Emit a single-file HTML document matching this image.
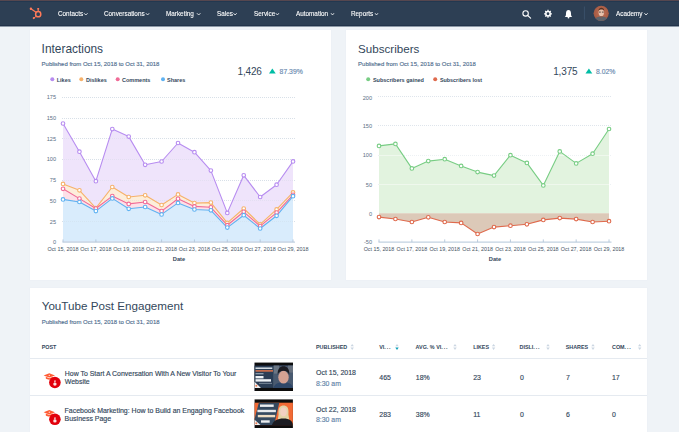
<!DOCTYPE html>
<html><head><meta charset="utf-8"><style>
html,body{margin:0;padding:0;background:#fff;}
body{width:681px;height:442px;position:relative;overflow:hidden;font-family:"Liberation Sans",sans-serif;}
.t{position:absolute;white-space:nowrap;}
.abs{position:absolute;}
.card{position:absolute;background:#fff;box-shadow:0 0 0 0.5px #ebf0f5;}
.s{-webkit-text-stroke:0.2px currentColor;}
</style></head><body>
<div class="abs" style="left:0;top:0;width:679px;height:432px;background:#eff3f7"></div>
<div class="abs" style="left:0;top:0;width:679px;height:1px;background:#56474f"></div>
<div class="abs" style="left:0;top:1px;width:679px;height:25px;background:#2d3f54"></div>
<div class="abs" style="left:0;top:25px;width:679px;height:1px;background:#22334a"></div>
<div class="abs" style="left:0;top:1px;width:679px;height:1px;background:#233850"></div>
<div class="abs" style="left:0;top:26px;width:679px;height:1px;background:#8d99a6"></div>
<div class="card" style="left:30px;top:30px;width:301px;height:250px"></div>
<div class="card" style="left:346px;top:30px;width:301px;height:250px"></div>
<div class="card" style="left:30px;top:287.5px;width:617px;height:150px"></div>
<div class="abs" style="left:30px;top:358px;width:617px;height:0.8px;background:#e5eaf0"></div>
<div class="abs" style="left:30px;top:394.5px;width:617px;height:0.8px;background:#e5eaf0"></div>
<svg class="abs" style="left:0;top:0" width="681" height="442" viewBox="0 0 681 442">
<g id="logo" fill="#ff7a59" stroke="#ff7a59">
<circle cx="38.2" cy="14.2" r="2.6" fill="none" stroke-width="1.5"/>
<line x1="30.9" y1="8.7" x2="36.4" y2="12.5" stroke-width="1.15"/>
<circle cx="30.9" cy="8.7" r="1.2" stroke="none"/>
<line x1="38.2" y1="8.9" x2="38.2" y2="11.6" stroke-width="1.1"/>
<rect x="37.2" y="8.0" width="2" height="1.6" rx="0.5" stroke="none"/>
<line x1="33.9" y1="18" x2="36.3" y2="16.2" stroke-width="1"/>
<circle cx="33.8" cy="18.1" r="1.1" stroke="none"/>
</g>
<polyline points="84.0,13.2 85.8,15.0 87.6,13.2" fill="none" stroke="#fff" stroke-width="0.8"/><polyline points="145.9,13.2 147.6,15.0 149.2,13.2" fill="none" stroke="#fff" stroke-width="0.8"/><polyline points="196.9,13.2 198.7,15.0 200.4,13.2" fill="none" stroke="#fff" stroke-width="0.8"/><polyline points="233.5,13.2 235.1,15.0 236.7,13.2" fill="none" stroke="#fff" stroke-width="0.8"/><polyline points="275.8,13.2 277.4,15.0 278.9,13.2" fill="none" stroke="#fff" stroke-width="0.8"/><polyline points="331.0,13.2 332.5,15.0 334.0,13.2" fill="none" stroke="#fff" stroke-width="0.8"/><polyline points="375.0,13.2 376.5,15.0 378.0,13.2" fill="none" stroke="#fff" stroke-width="0.8"/><polyline points="644.4,13.2 646.0,15.0 647.7,13.2" fill="none" stroke="#fff" stroke-width="0.8"/>
<g id="search" stroke="#fff" fill="none"><circle cx="525.6" cy="13.4" r="2.7" stroke-width="1.1"/><line x1="527.6" y1="15.4" x2="530.6" y2="18.1" stroke-width="1.2" stroke-linecap="round"/></g>
<g id="gear"><circle cx="548" cy="13.75" r="2.2" fill="none" stroke="#fff" stroke-width="1.6"/><line x1="550.60" y1="13.75" x2="551.90" y2="13.75" stroke="#fff" stroke-width="1.25"/><line x1="549.84" y1="15.59" x2="550.76" y2="16.51" stroke="#fff" stroke-width="1.25"/><line x1="548.00" y1="16.35" x2="548.00" y2="17.65" stroke="#fff" stroke-width="1.25"/><line x1="546.16" y1="15.59" x2="545.24" y2="16.51" stroke="#fff" stroke-width="1.25"/><line x1="545.40" y1="13.75" x2="544.10" y2="13.75" stroke="#fff" stroke-width="1.25"/><line x1="546.16" y1="11.91" x2="545.24" y2="10.99" stroke="#fff" stroke-width="1.25"/><line x1="548.00" y1="11.15" x2="548.00" y2="9.85" stroke="#fff" stroke-width="1.25"/><line x1="549.84" y1="11.91" x2="550.76" y2="10.99" stroke="#fff" stroke-width="1.25"/></g>
<g id="bell" fill="#fff"><path d="M564.8,16.9 C565.9,16.1 566,15 566,13.3 C566,11.2 567,10 568.5,10 C570,10 571,11.2 571,13.3 C571,15 571.1,16.1 572.2,16.9 Z"/><circle cx="568.5" cy="17.6" r="0.9"/></g>
<line x1="584.4" y1="6.5" x2="584.4" y2="19.6" stroke="#3e5670" stroke-width="0.8"/>
<defs><radialGradient id="av" cx="0.5" cy="0.45" r="0.6"><stop offset="0" stop-color="#c27256"/><stop offset="1" stop-color="#9c523d"/></radialGradient>
<clipPath id="avc"><circle cx="601.2" cy="13.3" r="7.6"/></clipPath></defs>
<g clip-path="url(#avc)">
<rect x="593" y="5" width="17" height="17" fill="url(#av)"/>
<ellipse cx="601.3" cy="12.6" rx="2.7" ry="3.6" fill="#e8c2ac"/>
<path d="M598.4,11 C598.6,8.4 600,7.8 601.4,7.8 C602.8,7.8 604.2,8.4 604.3,11 C603.6,9.9 602.6,9.6 601.4,9.6 C600.2,9.6 599.1,9.9 598.4,11 Z" fill="#5a3324"/>
<rect x="599" y="11.6" width="1.8" height="1" fill="#5b4a44"/><rect x="601.9" y="11.6" width="1.8" height="1" fill="#5b4a44"/>
<path d="M594,22 C594.5,18 597,16.6 601.3,16.6 C605.6,16.6 608.1,18 608.6,22 Z" fill="#5f646c"/>
<path d="M600.3,16.6 L601.3,18.6 L602.3,16.6 Z" fill="#8a5a48"/>
</g>
<circle cx="52.3" cy="79.2" r="2" fill="#b78cf0"/><circle cx="81.3" cy="79.2" r="2" fill="#f6b26b"/><circle cx="117.7" cy="79.2" r="2" fill="#f06b97"/><circle cx="163" cy="79.2" r="2" fill="#5fb2f2"/><circle cx="368.2" cy="79.2" r="2" fill="#78cd84"/><circle cx="435.2" cy="79.2" r="2" fill="#df6a4d"/>
<polygon points="269,73.4 275.7,73.4 272.35,68.4" fill="#00bda5"/><polygon points="585.5,73.4 592.3,73.4 588.9,68.4" fill="#00bda5"/>
<line x1="62" y1="97.5" x2="295" y2="97.5" stroke="#dfe5ec" stroke-width="1" stroke-dasharray="1,1"/>
<line x1="62" y1="118.5" x2="295" y2="118.5" stroke="#dfe5ec" stroke-width="1" stroke-dasharray="1,1"/>
<line x1="62" y1="138.5" x2="295" y2="138.5" stroke="#dfe5ec" stroke-width="1" stroke-dasharray="1,1"/>
<line x1="62" y1="159.5" x2="295" y2="159.5" stroke="#dfe5ec" stroke-width="1" stroke-dasharray="1,1"/>
<line x1="62" y1="180.5" x2="295" y2="180.5" stroke="#dfe5ec" stroke-width="1" stroke-dasharray="1,1"/>
<line x1="62" y1="200.5" x2="295" y2="200.5" stroke="#dfe5ec" stroke-width="1" stroke-dasharray="1,1"/>
<line x1="62" y1="221.5" x2="295" y2="221.5" stroke="#dfe5ec" stroke-width="1" stroke-dasharray="1,1"/>
<line x1="378" y1="96.5" x2="611" y2="96.5" stroke="#dfe5ec" stroke-width="1" stroke-dasharray="1,1"/>
<line x1="378" y1="125.5" x2="611" y2="125.5" stroke="#dfe5ec" stroke-width="1" stroke-dasharray="1,1"/>
<line x1="378" y1="155.5" x2="611" y2="155.5" stroke="#dfe5ec" stroke-width="1" stroke-dasharray="1,1"/>
<line x1="378" y1="184.5" x2="611" y2="184.5" stroke="#dfe5ec" stroke-width="1" stroke-dasharray="1,1"/>
<path d="M63.00,123.50 L79.43,151.70 L95.86,181.20 L112.29,129.10 L128.72,136.60 L145.15,164.80 L161.58,161.50 L178.01,143.00 L194.44,152.20 L210.87,170.60 L227.30,212.90 L243.73,175.30 L260.16,197.00 L276.59,184.70 L293.02,161.40 L293.02,241.8 L63.00,241.8 Z" fill="#efe4fb"/>
<path d="M63.00,183.90 L79.43,190.30 L95.86,208.20 L112.29,187.00 L128.72,197.00 L145.15,195.30 L161.58,205.00 L178.01,194.40 L194.44,203.10 L210.87,202.60 L227.30,222.90 L243.73,208.50 L260.16,224.40 L276.59,209.40 L293.02,192.40 L293.02,241.8 L63.00,241.8 Z" fill="#fdeedb"/>
<path d="M63.00,188.80 L79.43,198.60 L95.86,208.50 L112.29,196.10 L128.72,203.90 L145.15,202.00 L161.58,211.10 L178.01,198.80 L194.44,206.40 L210.87,207.30 L227.30,225.20 L243.73,211.80 L260.16,226.10 L276.59,212.60 L293.02,194.80 L293.02,241.8 L63.00,241.8 Z" fill="#fde0e8"/>
<path d="M63.00,199.40 L79.43,202.00 L95.86,211.10 L112.29,198.40 L128.72,208.80 L145.15,207.00 L161.58,214.40 L178.01,202.90 L194.44,209.50 L210.87,210.30 L227.30,227.60 L243.73,215.20 L260.16,228.50 L276.59,215.80 L293.02,196.20 L293.02,241.8 L63.00,241.8 Z" fill="#d9ecfc"/>
<line x1="62" y1="97.5" x2="295" y2="97.5" stroke="#c9d3de" stroke-opacity="0.3" stroke-width="1" stroke-dasharray="1,1"/>
<line x1="62" y1="118.5" x2="295" y2="118.5" stroke="#c9d3de" stroke-opacity="0.3" stroke-width="1" stroke-dasharray="1,1"/>
<line x1="62" y1="138.5" x2="295" y2="138.5" stroke="#c9d3de" stroke-opacity="0.3" stroke-width="1" stroke-dasharray="1,1"/>
<line x1="62" y1="159.5" x2="295" y2="159.5" stroke="#c9d3de" stroke-opacity="0.3" stroke-width="1" stroke-dasharray="1,1"/>
<line x1="62" y1="180.5" x2="295" y2="180.5" stroke="#c9d3de" stroke-opacity="0.3" stroke-width="1" stroke-dasharray="1,1"/>
<line x1="62" y1="200.5" x2="295" y2="200.5" stroke="#c9d3de" stroke-opacity="0.3" stroke-width="1" stroke-dasharray="1,1"/>
<line x1="62" y1="221.5" x2="295" y2="221.5" stroke="#c9d3de" stroke-opacity="0.3" stroke-width="1" stroke-dasharray="1,1"/>
<path d="M63.00,123.50 L79.43,151.70 L95.86,181.20 L112.29,129.10 L128.72,136.60 L145.15,164.80 L161.58,161.50 L178.01,143.00 L194.44,152.20 L210.87,170.60 L227.30,212.90 L243.73,175.30 L260.16,197.00 L276.59,184.70 L293.02,161.40" fill="none" stroke="#b78cf0" stroke-width="1.1" stroke-linejoin="round"/>
<path d="M63.00,183.90 L79.43,190.30 L95.86,208.20 L112.29,187.00 L128.72,197.00 L145.15,195.30 L161.58,205.00 L178.01,194.40 L194.44,203.10 L210.87,202.60 L227.30,222.90 L243.73,208.50 L260.16,224.40 L276.59,209.40 L293.02,192.40" fill="none" stroke="#f6b26b" stroke-width="1.1" stroke-linejoin="round"/>
<path d="M63.00,188.80 L79.43,198.60 L95.86,208.50 L112.29,196.10 L128.72,203.90 L145.15,202.00 L161.58,211.10 L178.01,198.80 L194.44,206.40 L210.87,207.30 L227.30,225.20 L243.73,211.80 L260.16,226.10 L276.59,212.60 L293.02,194.80" fill="none" stroke="#f06b97" stroke-width="1.1" stroke-linejoin="round"/>
<path d="M63.00,199.40 L79.43,202.00 L95.86,211.10 L112.29,198.40 L128.72,208.80 L145.15,207.00 L161.58,214.40 L178.01,202.90 L194.44,209.50 L210.87,210.30 L227.30,227.60 L243.73,215.20 L260.16,228.50 L276.59,215.80 L293.02,196.20" fill="none" stroke="#5fb2f2" stroke-width="1.1" stroke-linejoin="round"/>
<circle cx="63.00" cy="123.50" r="1.8" fill="#fff" stroke="#b78cf0" stroke-width="1.1"/><circle cx="79.43" cy="151.70" r="1.8" fill="#fff" stroke="#b78cf0" stroke-width="1.1"/><circle cx="95.86" cy="181.20" r="1.8" fill="#fff" stroke="#b78cf0" stroke-width="1.1"/><circle cx="112.29" cy="129.10" r="1.8" fill="#fff" stroke="#b78cf0" stroke-width="1.1"/><circle cx="128.72" cy="136.60" r="1.8" fill="#fff" stroke="#b78cf0" stroke-width="1.1"/><circle cx="145.15" cy="164.80" r="1.8" fill="#fff" stroke="#b78cf0" stroke-width="1.1"/><circle cx="161.58" cy="161.50" r="1.8" fill="#fff" stroke="#b78cf0" stroke-width="1.1"/><circle cx="178.01" cy="143.00" r="1.8" fill="#fff" stroke="#b78cf0" stroke-width="1.1"/><circle cx="194.44" cy="152.20" r="1.8" fill="#fff" stroke="#b78cf0" stroke-width="1.1"/><circle cx="210.87" cy="170.60" r="1.8" fill="#fff" stroke="#b78cf0" stroke-width="1.1"/><circle cx="227.30" cy="212.90" r="1.8" fill="#fff" stroke="#b78cf0" stroke-width="1.1"/><circle cx="243.73" cy="175.30" r="1.8" fill="#fff" stroke="#b78cf0" stroke-width="1.1"/><circle cx="260.16" cy="197.00" r="1.8" fill="#fff" stroke="#b78cf0" stroke-width="1.1"/><circle cx="276.59" cy="184.70" r="1.8" fill="#fff" stroke="#b78cf0" stroke-width="1.1"/><circle cx="293.02" cy="161.40" r="1.8" fill="#fff" stroke="#b78cf0" stroke-width="1.1"/>
<circle cx="63.00" cy="183.90" r="1.8" fill="#fff" stroke="#f6b26b" stroke-width="1.1"/><circle cx="79.43" cy="190.30" r="1.8" fill="#fff" stroke="#f6b26b" stroke-width="1.1"/><circle cx="95.86" cy="208.20" r="1.8" fill="#fff" stroke="#f6b26b" stroke-width="1.1"/><circle cx="112.29" cy="187.00" r="1.8" fill="#fff" stroke="#f6b26b" stroke-width="1.1"/><circle cx="128.72" cy="197.00" r="1.8" fill="#fff" stroke="#f6b26b" stroke-width="1.1"/><circle cx="145.15" cy="195.30" r="1.8" fill="#fff" stroke="#f6b26b" stroke-width="1.1"/><circle cx="161.58" cy="205.00" r="1.8" fill="#fff" stroke="#f6b26b" stroke-width="1.1"/><circle cx="178.01" cy="194.40" r="1.8" fill="#fff" stroke="#f6b26b" stroke-width="1.1"/><circle cx="194.44" cy="203.10" r="1.8" fill="#fff" stroke="#f6b26b" stroke-width="1.1"/><circle cx="210.87" cy="202.60" r="1.8" fill="#fff" stroke="#f6b26b" stroke-width="1.1"/><circle cx="227.30" cy="222.90" r="1.8" fill="#fff" stroke="#f6b26b" stroke-width="1.1"/><circle cx="243.73" cy="208.50" r="1.8" fill="#fff" stroke="#f6b26b" stroke-width="1.1"/><circle cx="260.16" cy="224.40" r="1.8" fill="#fff" stroke="#f6b26b" stroke-width="1.1"/><circle cx="276.59" cy="209.40" r="1.8" fill="#fff" stroke="#f6b26b" stroke-width="1.1"/><circle cx="293.02" cy="192.40" r="1.8" fill="#fff" stroke="#f6b26b" stroke-width="1.1"/>
<circle cx="63.00" cy="188.80" r="1.8" fill="#fff" stroke="#f06b97" stroke-width="1.1"/><circle cx="79.43" cy="198.60" r="1.8" fill="#fff" stroke="#f06b97" stroke-width="1.1"/><circle cx="95.86" cy="208.50" r="1.8" fill="#fff" stroke="#f06b97" stroke-width="1.1"/><circle cx="112.29" cy="196.10" r="1.8" fill="#fff" stroke="#f06b97" stroke-width="1.1"/><circle cx="128.72" cy="203.90" r="1.8" fill="#fff" stroke="#f06b97" stroke-width="1.1"/><circle cx="145.15" cy="202.00" r="1.8" fill="#fff" stroke="#f06b97" stroke-width="1.1"/><circle cx="161.58" cy="211.10" r="1.8" fill="#fff" stroke="#f06b97" stroke-width="1.1"/><circle cx="178.01" cy="198.80" r="1.8" fill="#fff" stroke="#f06b97" stroke-width="1.1"/><circle cx="194.44" cy="206.40" r="1.8" fill="#fff" stroke="#f06b97" stroke-width="1.1"/><circle cx="210.87" cy="207.30" r="1.8" fill="#fff" stroke="#f06b97" stroke-width="1.1"/><circle cx="227.30" cy="225.20" r="1.8" fill="#fff" stroke="#f06b97" stroke-width="1.1"/><circle cx="243.73" cy="211.80" r="1.8" fill="#fff" stroke="#f06b97" stroke-width="1.1"/><circle cx="260.16" cy="226.10" r="1.8" fill="#fff" stroke="#f06b97" stroke-width="1.1"/><circle cx="276.59" cy="212.60" r="1.8" fill="#fff" stroke="#f06b97" stroke-width="1.1"/><circle cx="293.02" cy="194.80" r="1.8" fill="#fff" stroke="#f06b97" stroke-width="1.1"/>
<circle cx="63.00" cy="199.40" r="1.8" fill="#fff" stroke="#5fb2f2" stroke-width="1.1"/><circle cx="79.43" cy="202.00" r="1.8" fill="#fff" stroke="#5fb2f2" stroke-width="1.1"/><circle cx="95.86" cy="211.10" r="1.8" fill="#fff" stroke="#5fb2f2" stroke-width="1.1"/><circle cx="112.29" cy="198.40" r="1.8" fill="#fff" stroke="#5fb2f2" stroke-width="1.1"/><circle cx="128.72" cy="208.80" r="1.8" fill="#fff" stroke="#5fb2f2" stroke-width="1.1"/><circle cx="145.15" cy="207.00" r="1.8" fill="#fff" stroke="#5fb2f2" stroke-width="1.1"/><circle cx="161.58" cy="214.40" r="1.8" fill="#fff" stroke="#5fb2f2" stroke-width="1.1"/><circle cx="178.01" cy="202.90" r="1.8" fill="#fff" stroke="#5fb2f2" stroke-width="1.1"/><circle cx="194.44" cy="209.50" r="1.8" fill="#fff" stroke="#5fb2f2" stroke-width="1.1"/><circle cx="210.87" cy="210.30" r="1.8" fill="#fff" stroke="#5fb2f2" stroke-width="1.1"/><circle cx="227.30" cy="227.60" r="1.8" fill="#fff" stroke="#5fb2f2" stroke-width="1.1"/><circle cx="243.73" cy="215.20" r="1.8" fill="#fff" stroke="#5fb2f2" stroke-width="1.1"/><circle cx="260.16" cy="228.50" r="1.8" fill="#fff" stroke="#5fb2f2" stroke-width="1.1"/><circle cx="276.59" cy="215.80" r="1.8" fill="#fff" stroke="#5fb2f2" stroke-width="1.1"/><circle cx="293.02" cy="196.20" r="1.8" fill="#fff" stroke="#5fb2f2" stroke-width="1.1"/>
<line x1="62.5" y1="242.1" x2="295" y2="242.1" stroke="#b3c6d9" stroke-width="1"/>
<line x1="63.00" y1="239.4" x2="63.00" y2="242.1" stroke="#b3c6d9" stroke-width="0.9"/>
<line x1="95.86" y1="239.4" x2="95.86" y2="242.1" stroke="#b3c6d9" stroke-width="0.9"/>
<line x1="128.72" y1="239.4" x2="128.72" y2="242.1" stroke="#b3c6d9" stroke-width="0.9"/>
<line x1="161.58" y1="239.4" x2="161.58" y2="242.1" stroke="#b3c6d9" stroke-width="0.9"/>
<line x1="194.44" y1="239.4" x2="194.44" y2="242.1" stroke="#b3c6d9" stroke-width="0.9"/>
<line x1="227.30" y1="239.4" x2="227.30" y2="242.1" stroke="#b3c6d9" stroke-width="0.9"/>
<line x1="260.16" y1="239.4" x2="260.16" y2="242.1" stroke="#b3c6d9" stroke-width="0.9"/>
<line x1="293.02" y1="239.4" x2="293.02" y2="242.1" stroke="#b3c6d9" stroke-width="0.9"/>
<path d="M379.00,145.90 L395.43,143.90 L411.86,168.40 L428.29,161.10 L444.72,159.20 L461.15,165.90 L477.58,172.10 L494.01,175.60 L510.44,155.20 L526.87,162.90 L543.30,185.40 L559.73,151.40 L576.16,163.40 L592.59,153.70 L609.02,129.00 L609.02,213.2 L379.00,213.2 Z" fill="#e2f3df"/>
<path d="M379.00,217.10 L395.43,219.00 L411.86,222.00 L428.29,217.30 L444.72,222.00 L461.15,222.90 L477.58,234.00 L494.01,227.10 L510.44,225.70 L526.87,224.30 L543.30,219.90 L559.73,218.10 L576.16,219.10 L592.59,222.00 L609.02,221.20 L609.02,213.2 L379.00,213.2 Z" fill="#dcc9b8"/>
<line x1="378" y1="155.5" x2="611" y2="155.5" stroke="#ffffff" stroke-opacity="0.45" stroke-width="1"/>
<line x1="378" y1="184.5" x2="611" y2="184.5" stroke="#ffffff" stroke-opacity="0.45" stroke-width="1"/>
<path d="M379.00,145.90 L395.43,143.90 L411.86,168.40 L428.29,161.10 L444.72,159.20 L461.15,165.90 L477.58,172.10 L494.01,175.60 L510.44,155.20 L526.87,162.90 L543.30,185.40 L559.73,151.40 L576.16,163.40 L592.59,153.70 L609.02,129.00" fill="none" stroke="#78cd84" stroke-width="1.1" stroke-linejoin="round"/>
<path d="M379.00,217.10 L395.43,219.00 L411.86,222.00 L428.29,217.30 L444.72,222.00 L461.15,222.90 L477.58,234.00 L494.01,227.10 L510.44,225.70 L526.87,224.30 L543.30,219.90 L559.73,218.10 L576.16,219.10 L592.59,222.00 L609.02,221.20" fill="none" stroke="#df6a4d" stroke-width="1.1" stroke-linejoin="round"/>
<circle cx="379.00" cy="145.90" r="1.8" fill="#fff" stroke="#78cd84" stroke-width="1.1"/><circle cx="395.43" cy="143.90" r="1.8" fill="#fff" stroke="#78cd84" stroke-width="1.1"/><circle cx="411.86" cy="168.40" r="1.8" fill="#fff" stroke="#78cd84" stroke-width="1.1"/><circle cx="428.29" cy="161.10" r="1.8" fill="#fff" stroke="#78cd84" stroke-width="1.1"/><circle cx="444.72" cy="159.20" r="1.8" fill="#fff" stroke="#78cd84" stroke-width="1.1"/><circle cx="461.15" cy="165.90" r="1.8" fill="#fff" stroke="#78cd84" stroke-width="1.1"/><circle cx="477.58" cy="172.10" r="1.8" fill="#fff" stroke="#78cd84" stroke-width="1.1"/><circle cx="494.01" cy="175.60" r="1.8" fill="#fff" stroke="#78cd84" stroke-width="1.1"/><circle cx="510.44" cy="155.20" r="1.8" fill="#fff" stroke="#78cd84" stroke-width="1.1"/><circle cx="526.87" cy="162.90" r="1.8" fill="#fff" stroke="#78cd84" stroke-width="1.1"/><circle cx="543.30" cy="185.40" r="1.8" fill="#fff" stroke="#78cd84" stroke-width="1.1"/><circle cx="559.73" cy="151.40" r="1.8" fill="#fff" stroke="#78cd84" stroke-width="1.1"/><circle cx="576.16" cy="163.40" r="1.8" fill="#fff" stroke="#78cd84" stroke-width="1.1"/><circle cx="592.59" cy="153.70" r="1.8" fill="#fff" stroke="#78cd84" stroke-width="1.1"/><circle cx="609.02" cy="129.00" r="1.8" fill="#fff" stroke="#78cd84" stroke-width="1.1"/>
<circle cx="379.00" cy="217.10" r="1.8" fill="#fff" stroke="#df6a4d" stroke-width="1.1"/><circle cx="395.43" cy="219.00" r="1.8" fill="#fff" stroke="#df6a4d" stroke-width="1.1"/><circle cx="411.86" cy="222.00" r="1.8" fill="#fff" stroke="#df6a4d" stroke-width="1.1"/><circle cx="428.29" cy="217.30" r="1.8" fill="#fff" stroke="#df6a4d" stroke-width="1.1"/><circle cx="444.72" cy="222.00" r="1.8" fill="#fff" stroke="#df6a4d" stroke-width="1.1"/><circle cx="461.15" cy="222.90" r="1.8" fill="#fff" stroke="#df6a4d" stroke-width="1.1"/><circle cx="477.58" cy="234.00" r="1.8" fill="#fff" stroke="#df6a4d" stroke-width="1.1"/><circle cx="494.01" cy="227.10" r="1.8" fill="#fff" stroke="#df6a4d" stroke-width="1.1"/><circle cx="510.44" cy="225.70" r="1.8" fill="#fff" stroke="#df6a4d" stroke-width="1.1"/><circle cx="526.87" cy="224.30" r="1.8" fill="#fff" stroke="#df6a4d" stroke-width="1.1"/><circle cx="543.30" cy="219.90" r="1.8" fill="#fff" stroke="#df6a4d" stroke-width="1.1"/><circle cx="559.73" cy="218.10" r="1.8" fill="#fff" stroke="#df6a4d" stroke-width="1.1"/><circle cx="576.16" cy="219.10" r="1.8" fill="#fff" stroke="#df6a4d" stroke-width="1.1"/><circle cx="592.59" cy="222.00" r="1.8" fill="#fff" stroke="#df6a4d" stroke-width="1.1"/><circle cx="609.02" cy="221.20" r="1.8" fill="#fff" stroke="#df6a4d" stroke-width="1.1"/>
<line x1="378.5" y1="242.1" x2="611.5" y2="242.1" stroke="#b3c6d9" stroke-width="1"/>
<line x1="379.00" y1="239.4" x2="379.00" y2="242.1" stroke="#b3c6d9" stroke-width="0.9"/>
<line x1="411.86" y1="239.4" x2="411.86" y2="242.1" stroke="#b3c6d9" stroke-width="0.9"/>
<line x1="444.72" y1="239.4" x2="444.72" y2="242.1" stroke="#b3c6d9" stroke-width="0.9"/>
<line x1="477.58" y1="239.4" x2="477.58" y2="242.1" stroke="#b3c6d9" stroke-width="0.9"/>
<line x1="510.44" y1="239.4" x2="510.44" y2="242.1" stroke="#b3c6d9" stroke-width="0.9"/>
<line x1="543.30" y1="239.4" x2="543.30" y2="242.1" stroke="#b3c6d9" stroke-width="0.9"/>
<line x1="576.16" y1="239.4" x2="576.16" y2="242.1" stroke="#b3c6d9" stroke-width="0.9"/>
<line x1="609.02" y1="239.4" x2="609.02" y2="242.1" stroke="#b3c6d9" stroke-width="0.9"/>
<polygon points="350.5,346.2 353.9,346.2 352.2,343.9" fill="#cbd6e2"/><polygon points="350.5,347.5 353.9,347.5 352.2,349.9" fill="#cbd6e2"/><polygon points="395.3,346.2 398.7,346.2 397,343.9" fill="#cbd6e2"/><polygon points="395.3,347.5 398.7,347.5 397,349.9" fill="#0f9fb8"/><polygon points="453.3,346.2 456.7,346.2 455,343.9" fill="#cbd6e2"/><polygon points="453.3,347.5 456.7,347.5 455,349.9" fill="#cbd6e2"/><polygon points="491.90000000000003,346.2 495.3,346.2 493.6,343.9" fill="#cbd6e2"/><polygon points="491.90000000000003,347.5 495.3,347.5 493.6,349.9" fill="#cbd6e2"/><polygon points="546.3,346.2 549.7,346.2 548,343.9" fill="#cbd6e2"/><polygon points="546.3,347.5 549.7,347.5 548,349.9" fill="#cbd6e2"/><polygon points="591.3,346.2 594.7,346.2 593,343.9" fill="#cbd6e2"/><polygon points="591.3,347.5 594.7,347.5 593,349.9" fill="#cbd6e2"/><polygon points="638.0,346.2 641.4000000000001,346.2 639.7,343.9" fill="#cbd6e2"/><polygon points="638.0,347.5 641.4000000000001,347.5 639.7,349.9" fill="#cbd6e2"/>
<g id="ic1">
<path d="M43.6,375.4 L49.3,373.3 L55,375.4 L49.3,377.6 Z" fill="#ff5c35"/><path d="M45.8,376.8 L45.8,378.6 C47.6,380.1 51,380.1 52.8,378.6 L52.8,376.8 L49.3,378.2 Z" fill="#ff5c35"/>
<circle cx="49.3" cy="375.4" r="0.7" fill="#ffd8cc"/>
<circle cx="54.9" cy="382.5" r="5.8" fill="#e2000c"/>
<ellipse cx="54.9" cy="384.1" rx="1.7" ry="1.6" fill="#fbe0e0"/>
<path d="M54.1,380.6 L55.9,380.6 L55.3,382.6 L54.5,382.6 Z" fill="#fbe0e0"/>
</g>
<g id="ic2" transform="translate(0,36.8)">
<path d="M43.6,375.4 L49.3,373.3 L55,375.4 L49.3,377.6 Z" fill="#ff5c35"/><path d="M45.8,376.8 L45.8,378.6 C47.6,380.1 51,380.1 52.8,378.6 L52.8,376.8 L49.3,378.2 Z" fill="#ff5c35"/>
<circle cx="49.3" cy="375.4" r="0.7" fill="#ffd8cc"/>
<circle cx="54.9" cy="382.5" r="5.8" fill="#e2000c"/>
<ellipse cx="54.9" cy="384.1" rx="1.7" ry="1.6" fill="#fbe0e0"/>
<path d="M54.1,380.6 L55.9,380.6 L55.3,382.6 L54.5,382.6 Z" fill="#fbe0e0"/>
</g>
<defs><filter id="bl" x="-5%" y="-5%" width="110%" height="110%"><feGaussianBlur stdDeviation="0.35"/></filter></defs>
<g id="thumb1" filter="url(#bl)">
<rect x="254.5" y="362.6" width="38.5" height="28.4" fill="#0d0d0f"/>
<rect x="254.5" y="365.6" width="38.5" height="22.3" fill="#2c3e55"/>
<rect x="273.2" y="365.6" width="19.8" height="22.3" fill="#4a5a70"/>
<rect x="274" y="365.6" width="5" height="8" fill="#6b7684"/>
<rect x="288" y="365.6" width="5" height="7" fill="#66707e"/>
<path d="M273.5,387.9 C274.5,383.5 278.5,382.5 283.5,382.5 C288.5,382.5 292,383.5 293,387.9 Z" fill="#2d4668"/>
<ellipse cx="283.5" cy="377.2" rx="5.2" ry="6.4" fill="#d4a293"/>
<path d="M277.8,375 C277,368.5 280.5,366.2 283.5,366.2 C286.5,366.2 290,368.5 289.2,375 C288.4,371.8 286.5,370.8 283.5,370.8 C280.5,370.8 278.6,371.8 277.8,375 Z" fill="#1c1c22"/>
<rect x="255.5" y="367.5" width="16.8" height="1.4" fill="#e4eaf0"/>
<rect x="255.5" y="370.2" width="17.5" height="1.4" fill="#e8764a"/>
<rect x="255.5" y="373.2" width="8" height="1.1" fill="#9fb0c0"/>
<rect x="255.5" y="376" width="8" height="2.4" fill="#eef2f6"/>
<rect x="255.5" y="379.2" width="15.5" height="2.4" fill="#eef2f6"/>
<rect x="259" y="382.9" width="13" height="0.9" fill="#7d8ea0"/>
<path d="M254.5,381.8 L261,387.9 L254.5,387.9 Z" fill="#f2f2f2"/>
<circle cx="256.3" cy="385.8" r="1" fill="#f07a4e"/>
</g>
<g id="thumb2" filter="url(#bl)">
<rect x="254.6" y="399.4" width="38.3" height="28.6" fill="#0d0d0f"/>
<rect x="254.6" y="402.7" width="38.3" height="22.4" fill="#f26a34"/>
<path d="M258.8,402.7 L279.3,402.7 L274.2,425.1 L254.6,425.1 L254.6,419 Z" fill="#34495f"/>
<rect x="260" y="404.5" width="13.7" height="2.4" fill="#eceef0"/>
<rect x="257.4" y="409.8" width="18.5" height="2.4" fill="#e6e9ec"/>
<rect x="257.8" y="414.9" width="17.4" height="2.4" fill="#eedcc2"/>
<rect x="261" y="420.3" width="8.7" height="2.4" fill="#eceef0"/>
<path d="M278.6,414.5 C277.8,407.5 280.4,405.6 283.5,405.6 C286.6,405.6 289.2,407.5 288.4,414.5 L289.2,419.5 L277.8,419.5 Z" fill="#e2d3a8"/>
<ellipse cx="283.5" cy="411.8" rx="3.3" ry="4.4" fill="#f2d0c2"/>
<path d="M272,425.1 C273,420.5 277.5,418.4 283.5,418.4 C289.5,418.4 292.5,420.5 292.9,425.1 Z" fill="#1c1c20"/>
<path d="M254.6,419.8 L260.5,425.1 L254.6,425.1 Z" fill="#f2f2f2"/>
<circle cx="256.3" cy="423.2" r="1" fill="#f07a4e"/>
</g>
</svg>
<div class="t" style="left:57.50px;top:11px;font-size:6.7px;line-height:6.7px;color:#ffffff;font-weight:400;-webkit-text-stroke:0.1px #fff;transform:scaleX(0.95);transform-origin:0 0;">Contacts</div><div class="t" style="left:104.00px;top:11px;font-size:6.7px;line-height:6.7px;color:#ffffff;font-weight:400;-webkit-text-stroke:0.1px #fff;transform:scaleX(0.95);transform-origin:0 0;">Conversations</div><div class="t" style="left:165.80px;top:11px;font-size:6.7px;line-height:6.7px;color:#ffffff;font-weight:400;-webkit-text-stroke:0.1px #fff;transform:scaleX(0.95);transform-origin:0 0;">Marketing</div><div class="t" style="left:216.90px;top:11px;font-size:6.7px;line-height:6.7px;color:#ffffff;font-weight:400;-webkit-text-stroke:0.1px #fff;transform:scaleX(0.95);transform-origin:0 0;">Sales</div><div class="t" style="left:253.90px;top:11px;font-size:6.7px;line-height:6.7px;color:#ffffff;font-weight:400;-webkit-text-stroke:0.1px #fff;transform:scaleX(0.95);transform-origin:0 0;">Service</div><div class="t" style="left:296.20px;top:11px;font-size:6.7px;line-height:6.7px;color:#ffffff;font-weight:400;-webkit-text-stroke:0.1px #fff;transform:scaleX(0.95);transform-origin:0 0;">Automation</div><div class="t" style="left:351.20px;top:11px;font-size:6.7px;line-height:6.7px;color:#ffffff;font-weight:400;-webkit-text-stroke:0.1px #fff;transform:scaleX(0.95);transform-origin:0 0;">Reports</div><div class="t" style="left:615.70px;top:11px;font-size:6.7px;line-height:6.7px;color:#ffffff;font-weight:400;-webkit-text-stroke:0.1px #fff;transform:scaleX(0.95);transform-origin:0 0;">Academy</div><div class="t" style="left:41.60px;top:44px;font-size:11.9px;line-height:11.9px;color:#33475b;font-weight:400;">Interactions</div><div class="t" style="left:41.60px;top:62px;font-size:5.96px;line-height:5.96px;color:#516f90;font-weight:400;-webkit-text-stroke:0.15px #516f90;">Published from Oct 15, 2018 to Oct 31, 2018</div><div class="t" style="left:56.70px;top:78px;font-size:5.5px;line-height:5.5px;color:#33475b;font-weight:700;">Likes</div><div class="t" style="left:86.00px;top:78px;font-size:5.5px;line-height:5.5px;color:#33475b;font-weight:700;">Dislikes</div><div class="t" style="left:122.00px;top:78px;font-size:5.5px;line-height:5.5px;color:#33475b;font-weight:700;">Comments</div><div class="t" style="left:167.00px;top:78px;font-size:5.5px;line-height:5.5px;color:#33475b;font-weight:700;">Shares</div><div class="t" style="left:237.50px;top:67px;font-size:10px;line-height:10px;color:#33475b;font-weight:400;letter-spacing:-0.15px;">1,426</div><div class="t" style="left:279.60px;top:69px;font-size:6.84px;line-height:6.84px;color:#6b8bb0;font-weight:400;-webkit-text-stroke:0.15px #6b8bb0;">87.39%</div><div class="t" style="right:625.00px;top:95px;font-size:5.6px;line-height:5.6px;color:#5a6f85;font-weight:400;-webkit-text-stroke:0;">175</div><div class="t" style="right:625.00px;top:116px;font-size:5.6px;line-height:5.6px;color:#5a6f85;font-weight:400;-webkit-text-stroke:0;">150</div><div class="t" style="right:625.00px;top:137px;font-size:5.6px;line-height:5.6px;color:#5a6f85;font-weight:400;-webkit-text-stroke:0;">125</div><div class="t" style="right:625.00px;top:157px;font-size:5.6px;line-height:5.6px;color:#5a6f85;font-weight:400;-webkit-text-stroke:0;">100</div><div class="t" style="right:625.00px;top:178px;font-size:5.6px;line-height:5.6px;color:#5a6f85;font-weight:400;-webkit-text-stroke:0;">75</div><div class="t" style="right:625.00px;top:199px;font-size:5.6px;line-height:5.6px;color:#5a6f85;font-weight:400;-webkit-text-stroke:0;">50</div><div class="t" style="right:625.00px;top:220px;font-size:5.6px;line-height:5.6px;color:#5a6f85;font-weight:400;-webkit-text-stroke:0;">25</div><div class="t" style="right:625.00px;top:240px;font-size:5.6px;line-height:5.6px;color:#5a6f85;font-weight:400;-webkit-text-stroke:0;">0</div><div class="t" style="left:-37.00px;width:200px;text-align:center;top:247px;font-size:5.45px;line-height:5.45px;color:#45535f;font-weight:400;-webkit-text-stroke:0;">Oct 15, 2018</div><div class="t" style="left:-4.14px;width:200px;text-align:center;top:247px;font-size:5.45px;line-height:5.45px;color:#45535f;font-weight:400;-webkit-text-stroke:0;">Oct 17, 2018</div><div class="t" style="left:28.72px;width:200px;text-align:center;top:247px;font-size:5.45px;line-height:5.45px;color:#45535f;font-weight:400;-webkit-text-stroke:0;">Oct 19, 2018</div><div class="t" style="left:61.58px;width:200px;text-align:center;top:247px;font-size:5.45px;line-height:5.45px;color:#45535f;font-weight:400;-webkit-text-stroke:0;">Oct 21, 2018</div><div class="t" style="left:94.44px;width:200px;text-align:center;top:247px;font-size:5.45px;line-height:5.45px;color:#45535f;font-weight:400;-webkit-text-stroke:0;">Oct 23, 2018</div><div class="t" style="left:127.30px;width:200px;text-align:center;top:247px;font-size:5.45px;line-height:5.45px;color:#45535f;font-weight:400;-webkit-text-stroke:0;">Oct 25, 2018</div><div class="t" style="left:160.16px;width:200px;text-align:center;top:247px;font-size:5.45px;line-height:5.45px;color:#45535f;font-weight:400;-webkit-text-stroke:0;">Oct 27, 2018</div><div class="t" style="left:193.02px;width:200px;text-align:center;top:247px;font-size:5.45px;line-height:5.45px;color:#45535f;font-weight:400;-webkit-text-stroke:0;">Oct 29, 2018</div><div class="t" style="left:79.00px;width:200px;text-align:center;top:257px;font-size:5.7px;line-height:5.7px;color:#33475b;font-weight:700;">Date</div><div class="t" style="left:358.10px;top:43px;font-size:11.6px;line-height:11.6px;color:#33475b;font-weight:400;">Subscribers</div><div class="t" style="left:358.10px;top:62px;font-size:5.96px;line-height:5.96px;color:#516f90;font-weight:400;-webkit-text-stroke:0.15px #516f90;">Published from Oct 15, 2018 to Oct 31, 2018</div><div class="t" style="left:372.90px;top:78px;font-size:5.5px;line-height:5.5px;color:#33475b;font-weight:700;">Subscribers gained</div><div class="t" style="left:439.90px;top:78px;font-size:5.4px;line-height:5.4px;color:#33475b;font-weight:700;">Subscribers lost</div><div class="t" style="left:553.20px;top:67px;font-size:10px;line-height:10px;color:#33475b;font-weight:400;letter-spacing:-0.15px;">1,375</div><div class="t" style="left:596.00px;top:69px;font-size:6.84px;line-height:6.84px;color:#6b8bb0;font-weight:400;-webkit-text-stroke:0.15px #6b8bb0;">8.02%</div><div class="t" style="right:309.00px;top:96px;font-size:5.6px;line-height:5.6px;color:#5a6f85;font-weight:400;-webkit-text-stroke:0;">200</div><div class="t" style="right:309.00px;top:124px;font-size:5.6px;line-height:5.6px;color:#5a6f85;font-weight:400;-webkit-text-stroke:0;">150</div><div class="t" style="right:309.00px;top:153px;font-size:5.6px;line-height:5.6px;color:#5a6f85;font-weight:400;-webkit-text-stroke:0;">100</div><div class="t" style="right:309.00px;top:183px;font-size:5.6px;line-height:5.6px;color:#5a6f85;font-weight:400;-webkit-text-stroke:0;">50</div><div class="t" style="right:309.00px;top:212px;font-size:5.6px;line-height:5.6px;color:#5a6f85;font-weight:400;-webkit-text-stroke:0;">0</div><div class="t" style="right:309.00px;top:240px;font-size:5.6px;line-height:5.6px;color:#5a6f85;font-weight:400;-webkit-text-stroke:0;">-50</div><div class="t" style="left:279.00px;width:200px;text-align:center;top:247px;font-size:5.35px;line-height:5.35px;color:#45535f;font-weight:400;-webkit-text-stroke:0;">Oct 15, 2018</div><div class="t" style="left:311.86px;width:200px;text-align:center;top:247px;font-size:5.35px;line-height:5.35px;color:#45535f;font-weight:400;-webkit-text-stroke:0;">Oct 17, 2018</div><div class="t" style="left:344.72px;width:200px;text-align:center;top:247px;font-size:5.35px;line-height:5.35px;color:#45535f;font-weight:400;-webkit-text-stroke:0;">Oct 19, 2018</div><div class="t" style="left:377.58px;width:200px;text-align:center;top:247px;font-size:5.35px;line-height:5.35px;color:#45535f;font-weight:400;-webkit-text-stroke:0;">Oct 21, 2018</div><div class="t" style="left:410.44px;width:200px;text-align:center;top:247px;font-size:5.35px;line-height:5.35px;color:#45535f;font-weight:400;-webkit-text-stroke:0;">Oct 23, 2018</div><div class="t" style="left:443.30px;width:200px;text-align:center;top:247px;font-size:5.35px;line-height:5.35px;color:#45535f;font-weight:400;-webkit-text-stroke:0;">Oct 25, 2018</div><div class="t" style="left:476.16px;width:200px;text-align:center;top:247px;font-size:5.35px;line-height:5.35px;color:#45535f;font-weight:400;-webkit-text-stroke:0;">Oct 27, 2018</div><div class="t" style="left:509.02px;width:200px;text-align:center;top:247px;font-size:5.35px;line-height:5.35px;color:#45535f;font-weight:400;-webkit-text-stroke:0;">Oct 29, 2018</div><div class="t" style="left:395.00px;width:200px;text-align:center;top:257px;font-size:5.7px;line-height:5.7px;color:#33475b;font-weight:700;">Date</div><div class="t" style="left:41.70px;top:300px;font-size:11.65px;line-height:11.65px;color:#33475b;font-weight:400;">YouTube Post Engagement</div><div class="t" style="left:41.70px;top:320px;font-size:5.96px;line-height:5.96px;color:#516f90;font-weight:400;-webkit-text-stroke:0.15px #516f90;">Published from Oct 15, 2018 to Oct 31, 2018</div><div class="t" style="left:41.70px;top:345px;font-size:5.4px;line-height:5.4px;color:#33475b;font-weight:700;">POST</div><div class="t" style="left:316.00px;top:345px;font-size:5.4px;line-height:5.4px;color:#33475b;font-weight:700;">PUBLISHED</div><div class="t" style="left:379.20px;top:345px;font-size:5.4px;line-height:5.4px;color:#33475b;font-weight:700;">VI<span style="letter-spacing:0.9px">...</span></div><div class="t" style="left:415.60px;top:345px;font-size:5.4px;line-height:5.4px;color:#33475b;font-weight:700;">AVG. % VI<span style="letter-spacing:0.9px">...</span></div><div class="t" style="left:473.20px;top:345px;font-size:5.4px;line-height:5.4px;color:#33475b;font-weight:700;">LIKES</div><div class="t" style="left:519.50px;top:345px;font-size:5.4px;line-height:5.4px;color:#33475b;font-weight:700;">DISLI<span style="letter-spacing:0.9px">...</span></div><div class="t" style="left:565.70px;top:345px;font-size:5.4px;line-height:5.4px;color:#33475b;font-weight:700;">SHARES</div><div class="t" style="left:612.00px;top:345px;font-size:5.4px;line-height:5.4px;color:#33475b;font-weight:700;">COM<span style="letter-spacing:0.9px">...</span></div><div class="t" style="left:64.80px;top:371px;font-size:6.94px;line-height:6.94px;color:#33475b;font-weight:400;-webkit-text-stroke:0.15px #33475b;">How To Start A Conversation With A New Visitor To Your</div><div class="t" style="left:64.80px;top:379px;font-size:6.94px;line-height:6.94px;color:#33475b;font-weight:400;-webkit-text-stroke:0.15px #33475b;">Website</div><div class="t" style="left:64.60px;top:407px;font-size:6.98px;line-height:6.98px;color:#33475b;font-weight:400;-webkit-text-stroke:0.15px #33475b;">Facebook Marketing: How to Build an Engaging Facebook</div><div class="t" style="left:64.60px;top:415px;font-size:6.98px;line-height:6.98px;color:#33475b;font-weight:400;-webkit-text-stroke:0.15px #33475b;">Business Page</div><div class="t" style="left:316.00px;top:369px;font-size:6.98px;line-height:6.98px;color:#33475b;font-weight:400;-webkit-text-stroke:0.15px #33475b;">Oct 15, 2018</div><div class="t" style="left:316.00px;top:381px;font-size:6.9px;line-height:6.9px;color:#6283a8;font-weight:400;-webkit-text-stroke:0.15px #6283a8;">8:30 am</div><div class="t" style="left:379.30px;top:375px;font-size:6.95px;line-height:6.95px;color:#33475b;font-weight:400;-webkit-text-stroke:0.15px #33475b;">465</div><div class="t" style="left:415.80px;top:375px;font-size:6.95px;line-height:6.95px;color:#33475b;font-weight:400;-webkit-text-stroke:0.15px #33475b;">18%</div><div class="t" style="left:473.20px;top:375px;font-size:6.95px;line-height:6.95px;color:#33475b;font-weight:400;-webkit-text-stroke:0.15px #33475b;">23</div><div class="t" style="left:520.00px;top:375px;font-size:6.95px;line-height:6.95px;color:#33475b;font-weight:400;-webkit-text-stroke:0.15px #33475b;">0</div><div class="t" style="left:566.00px;top:375px;font-size:6.95px;line-height:6.95px;color:#33475b;font-weight:400;-webkit-text-stroke:0.15px #33475b;">7</div><div class="t" style="left:612.00px;top:375px;font-size:6.95px;line-height:6.95px;color:#33475b;font-weight:400;-webkit-text-stroke:0.15px #33475b;">17</div><div class="t" style="left:316.00px;top:406px;font-size:6.98px;line-height:6.98px;color:#33475b;font-weight:400;-webkit-text-stroke:0.15px #33475b;">Oct 22, 2018</div><div class="t" style="left:316.00px;top:417px;font-size:6.9px;line-height:6.9px;color:#6283a8;font-weight:400;-webkit-text-stroke:0.15px #6283a8;">8:30 am</div><div class="t" style="left:379.30px;top:412px;font-size:6.95px;line-height:6.95px;color:#33475b;font-weight:400;-webkit-text-stroke:0.15px #33475b;">283</div><div class="t" style="left:415.80px;top:412px;font-size:6.95px;line-height:6.95px;color:#33475b;font-weight:400;-webkit-text-stroke:0.15px #33475b;">38%</div><div class="t" style="left:473.20px;top:412px;font-size:6.95px;line-height:6.95px;color:#33475b;font-weight:400;-webkit-text-stroke:0.15px #33475b;">11</div><div class="t" style="left:520.00px;top:412px;font-size:6.95px;line-height:6.95px;color:#33475b;font-weight:400;-webkit-text-stroke:0.15px #33475b;">0</div><div class="t" style="left:566.00px;top:412px;font-size:6.95px;line-height:6.95px;color:#33475b;font-weight:400;-webkit-text-stroke:0.15px #33475b;">6</div><div class="t" style="left:612.00px;top:412px;font-size:6.95px;line-height:6.95px;color:#33475b;font-weight:400;-webkit-text-stroke:0.15px #33475b;">0</div>
<div class="abs" style="left:0;top:432px;width:681px;height:10px;background:#fff"></div>
<div class="abs" style="left:679px;top:0;width:2px;height:442px;background:#fff"></div>
</body></html>
